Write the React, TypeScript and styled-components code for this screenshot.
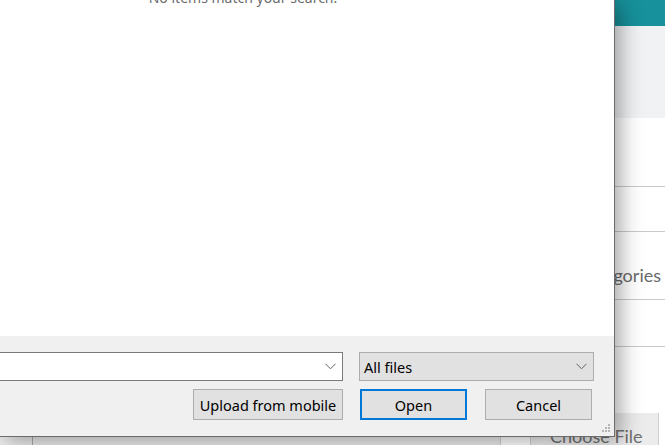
import React from "react";
import styled, { createGlobalStyle } from "styled-components";

const Global = createGlobalStyle`
  html, body { margin: 0; padding: 0; }
  body { width: 665px; height: 445px; overflow: hidden; background: #ffffff; font-family: "Noto Sans", "Liberation Sans", sans-serif; }
  #root { position: relative; width: 665px; height: 445px; }
`;

const Page = styled.div`
  width: 665px;
  height: 445px;
  display: flex;
  flex-direction: column;
  background: #ffffff;
`;

const PageHeader = styled.div`
  height: 26px;
  background: #17919b;
`;

const PageBand = styled.div`
  height: 92px;
  background: #f1f2f4;
`;

const PageRow = styled.div<{ $h: number }>`
  height: ${(p) => p.$h}px;
  border-bottom: 1px solid #c9c9c9;
  box-sizing: border-box;
  display: flex;
  align-items: flex-end;
  justify-content: flex-end;
  padding: 0 4px 14px 0;
`;

const RowLabel = styled.span`
  font-family: Lato, "Noto Sans", sans-serif;
  font-size: 18px;
  color: #6a6a6a;
  line-height: 20px;
`;

const PageFiller = styled.div`
  flex: 1;
`;

const FileRow = styled.div`
  height: 32px;
  display: flex;
`;

const FileField = styled.div`
  width: 501px;
  flex-shrink: 0;
  box-sizing: border-box;
  display: flex;
  background: #ebebeb;
  border-right: 1px solid #cfcfcf;
`;

const FileFieldLead = styled.div`
  width: 33px;
  box-sizing: border-box;
  border-right: 1px solid #a9adb3;
`;

const FileGap = styled.div`
  width: 29px;
  flex-shrink: 0;
`;

const ChooseFile = styled.div`
  width: 129px;
  flex-shrink: 0;
  box-sizing: border-box;
  background: #ececec;
  border-left: 1px solid #cfcfcf;
  border-right: 1px solid #cfcfcf;
  font-family: Lato, "Noto Sans", sans-serif;
  font-size: 18px;
  color: #707070;
  padding: 13px 0 0 19px;
  line-height: 20px;
  white-space: nowrap;
  overflow: hidden;
`;

const Dialog = styled.div`
  position: absolute;
  left: 0;
  top: 0;
  width: 615px;
  height: 437px;
  box-sizing: border-box;
  border-right: 1px solid #6b6b6b;
  border-bottom: 1px solid #6b6b6b;
  display: flex;
  flex-direction: column;
  box-shadow: 6px 4px 20px rgba(0, 0, 0, 0.34);
  font-family: "Noto Sans", "Liberation Sans", sans-serif;
  font-size: 14px;
  color: #000;
`;

const ListArea = styled.div`
  flex: 1;
  background: #ffffff;
  display: flex;
  justify-content: center;
  padding-right: 128px;
`;

const EmptyText = styled.div`
  margin-top: -11px;
  font-size: 14px;
  color: #6d6d6d;
  line-height: 18px;
  white-space: nowrap;
`;

const Footer = styled.div`
  height: 100px;
  box-sizing: border-box;
  background: #f0f0f0;
  padding: 16px 20px 0 0;
  display: flex;
  flex-direction: column;
  gap: 8px;
  position: relative;
`;

const ComboRow = styled.div`
  display: flex;
  gap: 16px;
  height: 29px;
`;

const Combo = styled.div<{ $w: number; $kind: "edit" | "list" }>`
  width: ${(p) => p.$w}px;
  height: 29px;
  box-sizing: border-box;
  border: 1px solid ${(p) => (p.$kind === "edit" ? "#7a7a7a" : "#adadad")};
  background: ${(p) => (p.$kind === "edit" ? "#ffffff" : "#e1e1e1")};
  display: flex;
  align-items: center;
  padding: 0 6px 0 4px;
  font-size: 14.5px;
`;

const EditCombo = styled(Combo)`
  margin-left: -1px;
`;

const ComboText = styled.span`
  flex: 1;
`;

const ButtonRow = styled.div`
  display: flex;
  justify-content: flex-end;
  padding-right: 2px;
`;

const Btn = styled.div<{ $w: number; $ml: number; $def?: boolean }>`
  width: ${(p) => p.$w}px;
  margin-left: ${(p) => p.$ml}px;
  height: 31px;
  box-sizing: border-box;
  background: #e1e1e1;
  border: ${(p) => (p.$def ? "2px solid #0078d7" : "1px solid #adadad")};
  display: flex;
  align-items: center;
  justify-content: center;
  font-size: 14.5px;
  white-space: nowrap;
`;

const Grip = styled.svg`
  position: absolute;
  right: 3px;
  bottom: 2px;
`;

const Chevron = () => (
  <svg width="11" height="7" viewBox="0 0 11 7">
    <path d="M0.5 0.8 L5.5 5.8 L10.5 0.8" fill="none" stroke="#606060" strokeWidth="1" />
  </svg>
);

export default function App() {
  return (
    <>
      <Global />
      <Page>
        <PageHeader />
        <PageBand />
        <PageRow $h={69} />
        <PageRow $h={45} />
        <PageRow $h={68}>
          <RowLabel>Categories</RowLabel>
        </PageRow>
        <PageRow $h={47} />
        <PageFiller />
        <FileRow>
          <FileField>
            <FileFieldLead />
          </FileField>
          <FileGap />
          <ChooseFile>Choose File</ChooseFile>
        </FileRow>
      </Page>
      <Dialog>
        <ListArea>
          <EmptyText>No items match your search.</EmptyText>
        </ListArea>
        <Footer>
          <ComboRow>
            <EditCombo $w={344} $kind="edit">
              <ComboText />
              <Chevron />
            </EditCombo>
            <Combo $w={235} $kind="list">
              <ComboText>All files</ComboText>
              <Chevron />
            </Combo>
          </ComboRow>
          <ButtonRow>
            <Btn $w={150} $ml={0}>Upload from mobile</Btn>
            <Btn $w={107} $ml={17} $def>Open</Btn>
            <Btn $w={107} $ml={18}>Cancel</Btn>
          </ButtonRow>
          <Grip width="10" height="10" viewBox="0 0 10 10">
            {[
              [7, 0],
              [4, 3],
              [7, 3],
              [1, 6],
              [4, 6],
              [7, 6],
            ].map(([x, y], i) => (
              <rect key={i} x={x} y={y} width="2" height="2" fill="#b5b5b5" />
            ))}
          </Grip>
        </Footer>
      </Dialog>
    </>
  );
}
